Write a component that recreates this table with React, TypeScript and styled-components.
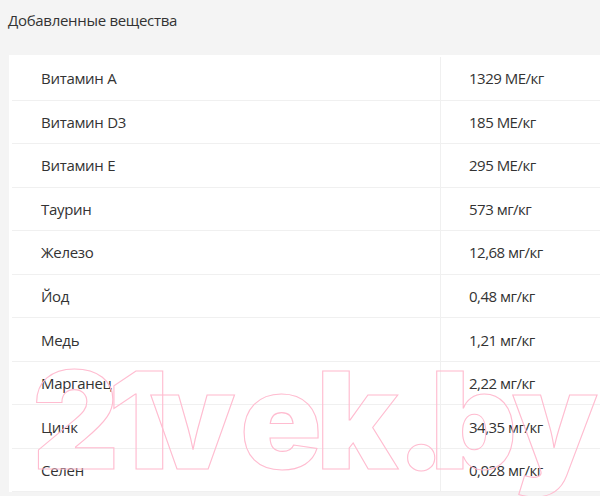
import React from "react";
import styled, { createGlobalStyle } from "styled-components";

const Global = createGlobalStyle`
  html, body { margin: 0; padding: 0; background: #f4f4f4; }
  body { font-family: "Open Sans", "Noto Sans", sans-serif; color: #333; overflow: hidden; }
`;

const Page = styled.div`
  position: relative;
  width: 600px;
  height: 496px;
  overflow: hidden;
  padding: 9px 0 0 8px;
  box-sizing: border-box;
`;

const Title = styled.h2`
  margin: 0;
  font-size: 15px;
  font-weight: 400;
  line-height: 22px;
  letter-spacing: -0.3px;
  color: #333;
`;

const Card = styled.div`
  margin-top: 24px;
  margin-left: 1px;
  width: 620px;
  background: #fff;
  padding: 2px 3px 0;
  box-sizing: border-box;
`;

const Row = styled.div`
  display: grid;
  grid-template-columns: 428px 1fr;
  height: 43.56px;
  border-bottom: 1px solid #f0f0f0;
  box-sizing: border-box;
`;

const Cell = styled.div<{ $value?: boolean }>`
  display: flex;
  align-items: center;
  padding-left: ${(p) => (p.$value ? "28px" : "29px")};
  border-left: ${(p) => (p.$value ? "1px solid #f0f0f0" : "none")};
  font-size: 15px;
  letter-spacing: ${(p) => (p.$value ? "-0.5px" : "-0.3px")};
  color: #333;
  white-space: nowrap;
`;

const WatermarkSvg = styled.svg`
  position: absolute;
  left: 0;
  top: 0;
  width: 600px;
  height: 496px;
  overflow: visible;
  pointer-events: none;
`;

const Glyph = styled.text`
  font-family: "Inter", "DejaVu Sans", sans-serif;
  font-weight: 900;
  font-size: 135px;
  fill: none;
  stroke: #ffbcd0;
  stroke-width: 1.1px;
`;

const rows: [string, string][] = [
  ["Витамин A", "1329 МЕ/кг"],
  ["Витамин D3", "185 МЕ/кг"],
  ["Витамин E", "295 МЕ/кг"],
  ["Таурин", "573 мг/кг"],
  ["Железо", "12,68 мг/кг"],
  ["Йод", "0,48 мг/кг"],
  ["Медь", "1,21 мг/кг"],
  ["Марганец", "2,22 мг/кг"],
  ["Цинк", "34,35 мг/кг"],
  ["Селен", "0,028 мг/кг"],
];

const glyphs: [string, number][] = [
  ["2", 32],
  ["1", 108],
  ["v", 150],
  ["e", 240],
  ["k", 316],
  [".", 396],
  ["b", 430],
  ["y", 512],
];

export default function App() {
  return (
    <Page>
      <Global />
      <Title>Добавленные вещества</Title>
      <Card>
        {rows.map(([name, value]) => (
          <Row key={name}>
            <Cell>{name}</Cell>
            <Cell $value>{value}</Cell>
          </Row>
        ))}
      </Card>
      <WatermarkSvg viewBox="0 0 600 496">
        {glyphs.map(([ch, x]) => (
          <Glyph key={ch + x} x={x} y={469}>
            {ch}
          </Glyph>
        ))}
      </WatermarkSvg>
    </Page>
  );
}
